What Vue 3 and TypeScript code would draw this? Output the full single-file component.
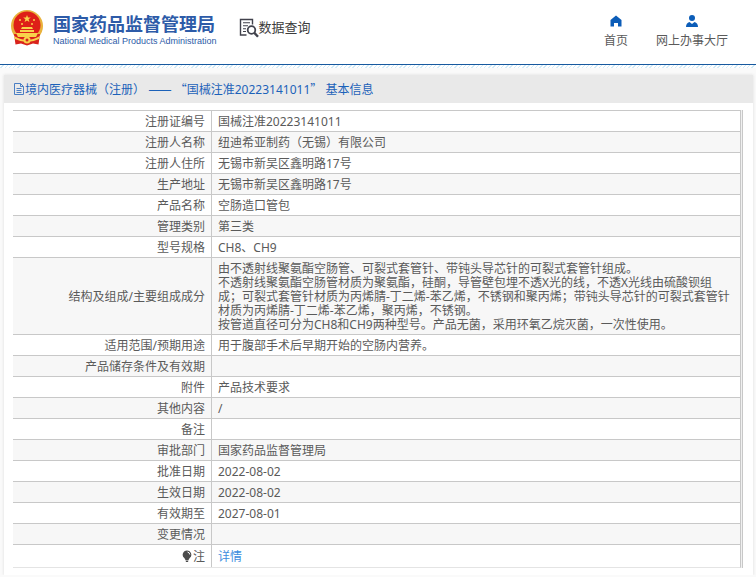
<script setup lang="ts">
interface Row {
  label: string
  lines: string[]
}

const certificate = '国械注准20223141011'

const rows: Row[] = [
  { label: '注册证编号', lines: [certificate] },
  { label: '注册人名称', lines: ['纽迪希亚制药（无锡）有限公司'] },
  { label: '注册人住所', lines: ['无锡市新吴区鑫明路17号'] },
  { label: '生产地址', lines: ['无锡市新吴区鑫明路17号'] },
  { label: '产品名称', lines: ['空肠造口管包'] },
  { label: '管理类别', lines: ['第三类'] },
  { label: '型号规格', lines: ['CH8、CH9'] },
  {
    label: '结构及组成/主要组成成分',
    lines: [
      '由不透射线聚氨酯空肠管、可裂式套管针、带钝头导芯针的可裂式套管针组成。',
      '不透射线聚氨酯空肠管材质为聚氨酯，硅酮，导管壁包埋不透X光的线，不透X光线由硫酸钡组成；可裂式套管针材质为丙烯腈-丁二烯-苯乙烯，不锈钢和聚丙烯；带钝头导芯针的可裂式套管针材质为丙烯腈-丁二烯-苯乙烯，聚丙烯，不锈钢。',
      '按管道直径可分为CH8和CH9两种型号。产品无菌，采用环氧乙烷灭菌，一次性使用。',
    ],
  },
  { label: '适用范围/预期用途', lines: ['用于腹部手术后早期开始的空肠内营养。'] },
  { label: '产品储存条件及有效期', lines: [] },
  { label: '附件', lines: ['产品技术要求'] },
  { label: '其他内容', lines: ['/'] },
  { label: '备注', lines: [] },
  { label: '审批部门', lines: ['国家药品监督管理局'] },
  { label: '批准日期', lines: ['2022-08-02'] },
  { label: '生效日期', lines: ['2022-08-02'] },
  { label: '有效期至', lines: ['2027-08-01'] },
  { label: '变更情况', lines: [] },
]
</script>

<template>
  <div class="page">
    <header class="header">
      <a class="brand" href="#">
        <svg class="emblem" viewBox="0 0 34 36" aria-hidden="true">
          <circle cx="17" cy="16" r="16" fill="#e9b23c" />
          <path d="M4 24h26l-1.500 10.500-5.500-1-6 2-6-2-5.500 1z" fill="#d9231c" />
          <circle cx="17" cy="15" r="13.500" fill="#de1f18" />
          <path d="M17 5l1 2.600h2.800l-2.200 1.700.8 2.700-2.400-1.600-2.400 1.600.8-2.700-2.200-1.700H16z" fill="#f8d24a" />
          <g fill="#f8d24a">
            <circle cx="10" cy="10" r="1" /><circle cx="24" cy="10" r="1" />
            <circle cx="12" cy="14" r="1" /><circle cx="22" cy="14" r="1" />
            <path d="M12 17h10l1 2H11zM10 20h14v2H10zM6 23h22l-2 4H8z" />
            <circle cx="17" cy="30" r="3.500" />
            <path d="M4 26q7 4 13 4t13-4l-1 3q-6 3-12 3T5 29z" />
          </g>
          <circle cx="17" cy="30" r="1.500" fill="#d9231c" />
        </svg>
        <span class="brand-text">
          <span class="brand-cn">国家药品监督管理局</span>
          <span class="brand-en">National Medical Products Administration</span>
        </span>
      </a>
      <a class="query" href="#">
        <svg class="query-icon" viewBox="0 0 20 20" fill="none" stroke="#41424c" aria-hidden="true">
          <path d="M7.500 17H1.500V1.500h12v5" stroke-width="1.400" />
          <path d="M4 4.800h7M4 7.800h5M4 10.800h3M4 13.500h3" stroke-width="1.100" />
          <circle cx="12.500" cy="12" r="3.800" stroke-width="1.800" />
          <path d="M15.300 14.800l3.700 4" stroke-width="2.400" />
        </svg>
        <span>数据查询</span>
      </a>
      <nav class="nav">
        <a href="#">
          <svg class="nav-icon" viewBox="0 0 12 12" fill="#0c5db8" aria-hidden="true">
            <path d="M6 0.500L0.500 5v6.500H4V8h4v3.500h3.500V5z" />
          </svg>
          <span>首页</span>
        </a>
        <a href="#">
          <svg class="nav-icon" viewBox="0 0 12 12" fill="#0c5db8" aria-hidden="true">
            <circle cx="6" cy="3" r="3" />
            <path d="M0 12Q0 8 3.500 7L6 9l2.500-2Q12 8 12 12z" />
          </svg>
          <span>网上办事大厅</span>
        </a>
      </nav>
    </header>
    <div class="hatch"></div>

    <main class="panel">
      <h1 class="title">
        <svg class="doc-icon" viewBox="0 0 12 12" fill="none" stroke="#4a7fc4" aria-hidden="true">
          <path d="M1.500 0.500h6l3 3v8h-9zM7.500 0.500v3h3M3.500 5.500h5M3.500 7.500h5M3.500 9.500h5" />
        </svg>
        <span>境内医疗器械（注册） <span class="dash">——</span> <span class="wide">“</span>{{ certificate }}<span class="wide">”</span>&nbsp;基本信息</span>
      </h1>
      <div class="frame">
        <table class="info">
          <tbody>
            <tr v-for="row in rows" :key="row.label">
              <th scope="row">{{ row.label }}</th>
              <td><div v-for="line in row.lines" :key="line">{{ line }}</div></td>
            </tr>
            <tr class="note">
              <th scope="row">
                <svg class="bulb" viewBox="0 0 10 12" aria-hidden="true">
                  <path d="M5 0.500a4.300 4.300 0 0 1 2.500 7.800L6.500 10h-3L2.500 8.300A4.300 4.300 0 0 1 5 0.500zM3.500 10.500h3L6 12H4z" fill="#4c4c4c" />
                  <path d="M5.500 2Q7.500 2.300 7.800 4.500" fill="none" stroke="#fff" />
                </svg>注
              </th>
              <td><a href="#">详情</a></td>
            </tr>
          </tbody>
        </table>
      </div>
    </main>
  </div>
</template>

<style>
body {
  margin: 0;
  background: #fafafa;
}
</style>

<style scoped>
.page {
  font: 12px/14px "Noto Sans", "Noto Sans CJK SC", sans-serif;
  color: #5a5a5a;
}
a {
  text-decoration: none;
  color: inherit;
}
svg {
  display: block;
  flex: none;
}
.header {
  display: flex;
  align-items: flex-start;
  box-sizing: border-box;
  height: 65px;
  padding: 0 28px 0 10px;
  background: #fff;
  border-bottom: 1px solid #17599f;
}
.hatch {
  height: 3px;
  background: repeating-linear-gradient(135deg, #fff 0 2px, #d3ebf7 2px 3px);
}
.brand {
  display: flex;
  gap: 9px;
  padding-top: 10px;
  color: #2d5ba8;
}
.emblem {
  width: 34px;
  height: 36px;
}
.brand-text {
  display: flex;
  flex-direction: column;
  padding-top: 3px;
}
.brand-cn {
  font: bold 18px/20px "Noto Sans CJK SC", sans-serif;
}
.brand-en {
  font: 9px/16px "Liberation Sans", sans-serif;
}
.query {
  display: flex;
  margin-left: 22px;
  padding-top: 18px;
  font-size: 13px;
  line-height: 18px;
  color: #3c3c3c;
}
.query-icon {
  width: 20px;
  height: 20px;
}
.nav {
  display: flex;
  gap: 28px;
  margin-left: auto;
  padding-top: 15px;
}
.nav a {
  display: flex;
  flex-direction: column;
  align-items: center;
  gap: 7px;
}
.nav-icon {
  width: 12px;
  height: 12px;
}
.panel {
  margin: 7px 3px 0 4px;
  padding-bottom: 7px;
  background: #fff;
  box-shadow: 0 0 3px #ddd;
}
.title {
  display: flex;
  align-items: center;
  height: 28px;
  margin: 0;
  padding-left: 9px;
  background: #e9e9e9;
  color: #1c62b9;
  font-size: 12px;
  font-weight: normal;
}
.doc-icon {
  width: 12px;
  height: 12px;
}
.wide,
.dash {
  font-family: "Noto Sans CJK SC", sans-serif;
}
.dash {
  font-size: 14px;
}
.frame {
  margin: 7px 10px 0 9px;
  padding-right: 1px;
  background: #f0f0f0;
  border-right: 1px solid #c8c8c8;
}
.info {
  width: 100%;
  border-collapse: separate;
  border-spacing: 0;
  background: #fff;
  border-right: 1px solid #c8c8c8;
  border-bottom: 1px solid #e4e4e4;
}
.info th,
.info td {
  height: 14px;
  padding: 4px 6px 2px;
  border-top: 1px solid #c8c8c8;
  font-weight: normal;
}
.info th {
  width: 186px;
  border-right: 1px solid #c8c8c8;
  text-align: right;
}
.info tr:nth-child(even) {
  background: #f7f7f7;
}
.info tr.note {
  background: #fff;
}
.info .note th,
.info .note td {
  padding-top: 5px;
  padding-bottom: 3px;
}
.note td {
  color: #3c8dde;
}
.bulb {
  display: inline-block;
  width: 10px;
  height: 12px;
  margin-right: 1px;
  vertical-align: -1px;
}
</style>
